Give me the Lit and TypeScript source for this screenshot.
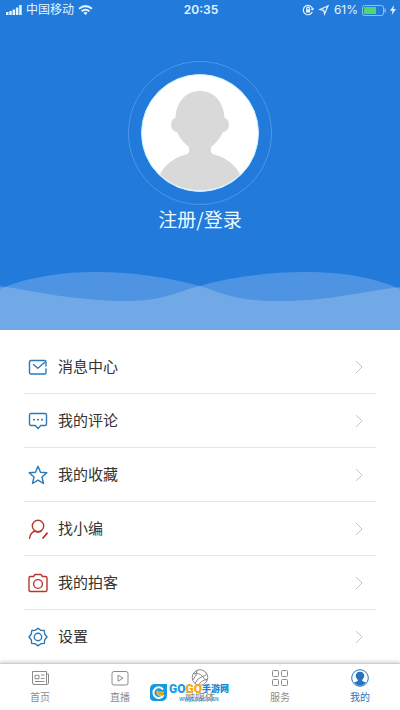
import { LitElement, html, css, svg } from "lit";
import { customElement, property } from "lit/decorators.js";

const rowIcons: Record<string, unknown> = {
  mail: svg`<path d="M18 12V15.500Q18 17 16.500 17H3Q1.500 17 1.500 15.500V5Q1.500 3.500 3 3.500H16.500Q18 3.500 18 5V9"/><path d="M5.500 7.500l4.300 3.800L16.500 5.500"/>`,
  comment: svg`<path d="M3 2.500H17Q18.500 2.500 18.500 4V13Q18.500 14.500 17 14.500H12.800L10 17.500L7.200 14.500H3Q1.500 14.500 1.500 13V4Q1.500 2.500 3 2.500Z"/><path stroke-width="1.800" d="M5.900 8.700h.2M9.900 8.700h.2M13.900 8.700h.2"/>`,
  star: svg`<path d="M10 1.300L12.500 7.200L18.800 7.800L14 12L15.500 18.500L10 15.100L4.500 18.500L6 12L1.200 7.800L7.500 7.200Z"/>`,
  editor: svg`<circle cx="10" cy="7" r="5.700"/><path d="M6.800 12C3.800 13.200 2 15.800 1.500 19.300"/><path d="M7 12.400Q10 13.700 13 12.300"/><path stroke-width="1.800" d="M19 14.300L15 19"/>`,
  camera: svg`<path d="M5.500 3.500L7 1.500H13L14.500 3.500H17.500Q19 3.500 19 5V17Q19 18.500 17.500 18.500H2.500Q1 18.500 1 17V5Q1 3.500 2.500 3.500Z"/><circle cx="10" cy="11" r="4.400"/>`,
  gear: svg`<path d="M10 1.200L12.700 3.300L16.200 3.500L16.700 7L19 10L16.700 12.900L16.300 16.400L12.800 16.700L10 18.900L7.200 16.700L3.700 16.400L3.300 12.900L1 10L3.300 7L3.800 3.500L7.300 3.300Z"/><circle cx="10" cy="10" r="3.700"/>`,
};

const tabIcons: Record<string, unknown> = {
  news: svg`<path d="M1.500 2.500H15.500V15.500H3Q1.500 15.500 1.500 14Z"/><path d="M15.500 5H17.500V14.500Q17.500 15.500 15.500 15.500"/><path d="M4 6.300h4v3.500H4ZM10 6h3.500M10 9.500h3.500M4 12.500h9.500"/>`,
  play: svg`<rect x="1" y="2.500" width="16" height="13.500" rx="2"/><path d="M7 6.200L12 9.200L7 12.200Z"/>`,
  ball: svg`<circle cx="9" cy="8.500" r="7.800"/><path d="M2.500 5Q8 3 11.500 7.500T16 12.500M4 14.500Q6 9 11.500 7.500T15 3.500M6 1.300Q6 6 2 11M8 16Q9 12 16.500 10"/>`,
  grid: svg`<rect x="1.500" y="1.500" width="6" height="6" rx="1"/><rect x="10.500" y="1.500" width="6" height="6" rx="1"/><rect x="1.500" y="10.500" width="6" height="6" rx="1"/><rect x="10.500" y="10.500" width="6" height="6" rx="1"/>`,
  me: svg`<circle cx="9" cy="9" r="8.300"/><path fill="currentColor" stroke="none" d="M9 2.800C11.800 2.800 13.300 4.700 13.200 7C13.200 8.500 12.400 9.700 11.200 10.800V12L15 13.600Q12.500 16.700 9 16.700T3 13.600L6.800 12V10.800C5.600 9.700 4.800 8.500 4.800 7C4.700 4.700 6.200 2.800 9 2.800Z"/>`,
};

@customElement("menu-row")
class MenuRow extends LitElement {
  @property() label = "";
  @property() icon = "mail";
  static styles = css`
    :host { display: block; border-bottom: 1px solid #e5e5e5; }
    :host(:last-of-type) { border-bottom: 0; }
    .row {
      display: flex; align-items: center; width: 100%; height: 53px;
      padding: 0 13px 0 4px; border: 0; background: none; color: #333;
      font: inherit; font-size: 15px; line-height: 20px; text-align: left; cursor: pointer;
    }
    .icon { width: 20px; height: 20px; margin-right: 10px; fill: none; stroke: #2b79b9; stroke-width: 1.4; stroke-linejoin: round; stroke-linecap: round; }
    .red { stroke: #b8352f; }
    .label { flex: 1; }
    .chevron { width: 8px; height: 14px; fill: none; stroke: #c4c4c4; }
  `;
  render() {
    const red = this.icon === "editor" || this.icon === "camera";
    return html`<button class="row" type="button">
      <svg class="icon ${red ? "red" : ""}" viewBox="0 0 20 20" aria-hidden="true">${rowIcons[this.icon]}</svg>
      <span class="label">${this.label}</span>
      <svg class="chevron" viewBox="0 0 8 14" aria-hidden="true"><path d="M1 1L7 7L1 13"/></svg>
    </button>`;
  }
}

@customElement("status-bar")
class StatusBar extends LitElement {
  static styles = css`
    :host {
      display: grid; grid-template-columns: 1fr auto 1fr; align-items: center;
      height: 20px; padding: 0 4px 0 6px; color: #e4f5ff; font-size: 12px; line-height: 20px;
    }
    .side { display: flex; align-items: center; gap: 4px; }
    .end { justify-content: flex-end; }
    .time { font-weight: 600; font-family: Inter, sans-serif; }
    .percent { font-family: Inter, sans-serif; }
    svg { display: block; fill: currentColor; }
    .line { fill: none; stroke: currentColor; }
  `;
  render() {
    return html`
      <div class="side">
        <svg width="16" height="10" viewBox="0 0 16 10"><path d="M0 7h2.500v3H0zM3.300 6h2.500v4H3.300zM6.600 4.500h2.500V10H6.600zM9.900 2.500h2.500V10H9.900zM13.200 0h2.500v10h-2.500z"/></svg>
        <span>中国移动</span>
        <svg width="15" height="10" viewBox="0 0 15 10"><path class="line" stroke-width="2" d="M1 3.700Q7.500-1.500 14 3.700M3.600 6.200Q7.500 3.200 11.400 6.200"/><path d="M5.300 7.700Q7.500 6.200 9.700 7.700L7.500 10Z"/></svg>
      </div>
      <span class="time">20:35</span>
      <div class="side end">
        <svg width="12" height="12" viewBox="0 0 12 12"><path class="line" stroke-width="1.200" d="M10.300 8A4.700 4.700 0 1 1 10.700 5.500M9 5.200l1.700.6 1-1.600M4.700 5.500V4.600a1.400 1.400 0 0 1 2.800 0v.9"/><path d="M4 5.300h4.100v3.200H4z"/></svg>
        <svg width="12" height="12" viewBox="0 0 12 12"><path class="line" stroke-width="1.200" d="M10 2L6.500 10L5.700 6.300L2 5.500Z"/></svg>
        <span class="percent">61%</span>
        <svg width="24" height="11" viewBox="0 0 24 11"><rect class="line" stroke-opacity=".55" x=".5" y=".5" width="21" height="10" rx="2"/><path fill="#4fd96b" d="M2 2h12v7H2z"/><path opacity=".6" d="M22.500 3.500h1.200v4h-1.200z"/></svg>
        <svg width="6" height="10" viewBox="0 0 6 10"><path d="M4 0L0 5.700H2.500L1.700 10L6 4H3.300Z"/></svg>
      </div>`;
  }
}

@customElement("app-root")
class AppRoot extends LitElement {
  private rows = [
    ["mail", "消息中心"], ["comment", "我的评论"], ["star", "我的收藏"],
    ["editor", "找小编"], ["camera", "我的拍客"], ["gear", "设置"],
  ];
  private tabs = [
    ["news", "首页"], ["play", "直播"], ["ball", "融媒体"], ["grid", "服务"], ["me", "我的"],
  ];
  static styles = css`
    :host {
      display: flex; flex-direction: column; min-height: 100vh; background: #fff;
      font-family: "Liberation Sans", "Noto Sans CJK SC", sans-serif;
    }
    .hero { display: flex; flex-direction: column; background: #227adb; }
    .profile {
      display: flex; flex-direction: column; align-items: center;
      align-self: center; margin: 41px 0 38px; padding: 0; border: 0; background: none;
      color: #e9faff; font: inherit; font-family: "Noto Sans CJK SC", sans-serif; font-size: 19px; line-height: 28px; cursor: pointer;
    }
    .avatar, .wave { display: block; }
    .wave { width: 100%; height: 59px; }
    .menu { flex: 1; padding: 10px 24px 0; }
    .tabs {
      position: sticky; bottom: 0; display: grid; grid-template-columns: repeat(5, 1fr);
      height: 47px; background: #fff; box-shadow: 0 -1px 4px #0003; border-top: 1px solid #d0d0d0; box-sizing: border-box;
    }
    .tab {
      display: flex; flex-direction: column; align-items: center; gap: 4px; padding-top: 5px;
      color: #8c8c8c; font-size: 10px; line-height: 14px; text-decoration: none;
    }
    .tab svg { width: 18px; height: 18px; fill: none; stroke: currentColor; stroke-width: 1; }
    .active { color: #2673bd; }
    .mark { position: absolute; left: 50%; top: 18px; display: flex; align-items: center; gap: 2px; margin-left: -50px; }
    .words { display: flex; flex-direction: column; }
    .brand { display: flex; align-items: center; white-space: nowrap; }
    .go { font: 900 12px/14px Roboto, sans-serif; color: #189be5; }
    .gold { color: #f5a90c; }
    .cn { font: 900 9px/14px "Noto Sans CJK SC", sans-serif; color: #168bd5; }
    .site { font: 700 5px/6px "Liberation Sans", sans-serif; color: #4b9bcf; text-align: center; }
  `;
  render() {
    return html`
      <header class="hero">
        <status-bar></status-bar>
        <button class="profile" type="button">
          <svg class="avatar" width="144" height="144" viewBox="0 0 144 144" aria-hidden="true">
            <defs><clipPath id="disc"><circle cx="72" cy="72" r="57.500"/></clipPath></defs>
            <circle cx="72" cy="72" r="71.500" fill="none" stroke="#4b98ea"/>
            <circle cx="72" cy="72" r="58.500" fill="#fff" stroke="#c4edff"/>
            <path clip-path="url(#disc)" fill="#d9d9d9" d="M72 30C86 30 96 41 96.500 57Q101 58 101 64Q100 71 95 71Q91 80 83 86V90C83 92 84 93 86 93.500C100 97 110 106 114 118V132H30V118C34 106 44 97 58 93.500C60 93 61 92 61 90V86Q53 80 49 71Q44 71 43 64Q43 58 47.500 57C48 41 58 30 72 30Z"/>
          </svg>
          <span>注册/登录</span>
        </button>
        <svg class="wave" viewBox="0 0 400 59" preserveAspectRatio="none" aria-hidden="true">
          <g fill="#fff" fill-opacity=".2">
            <path d="M0 18C30 5 65 1 95 1C135 1 170 7 200 15C225 23 235 30 280 30C330 30 365 20 400 16V59H0Z"/>
            <path d="M0 15C35 20 75 30 125 30C165 30 175 21 200 15C230 6 270 1 305 1C345 1 375 7 400 18V59H0Z"/>
          </g>
        </svg>
      </header>
      <main class="menu">
        ${this.rows.map(([icon, label]) => html`<menu-row .icon=${icon} .label=${label}></menu-row>`)}
      </main>
      <nav class="tabs">
        ${this.tabs.map(([icon, label]) => html`<a class="tab ${icon === "me" ? "active" : ""}" href="#${icon}">
          <svg viewBox="0 0 18 18" aria-hidden="true">${tabIcons[icon]}</svg><span>${label}</span></a>`)}
        <div class="mark">
          <svg width="17" height="17" viewBox="0 0 17 17" aria-hidden="true">
            <path fill="#1599df" d="M5 0H17V11Q17 17 11 17H4Q0 17 0 13V5Q0 0 5 0Z"/>
            <path fill="none" stroke="#fff" stroke-width="2" d="M13 5.500A5.300 5.300 0 1 0 13.500 11"/>
            <path fill="none" stroke="#f5b52a" stroke-width="2" d="M14 8.500H8.500M8 6.500Q6 9 9 11H13"/>
          </svg>
          <div class="words">
            <div class="brand"><span class="go">GO</span><span class="go gold">GO</span><span class="cn">手游网</span></div>
            <span class="site">WWW.GOGO.CN</span>
          </div>
        </div>
      </nav>`;
  }
}
